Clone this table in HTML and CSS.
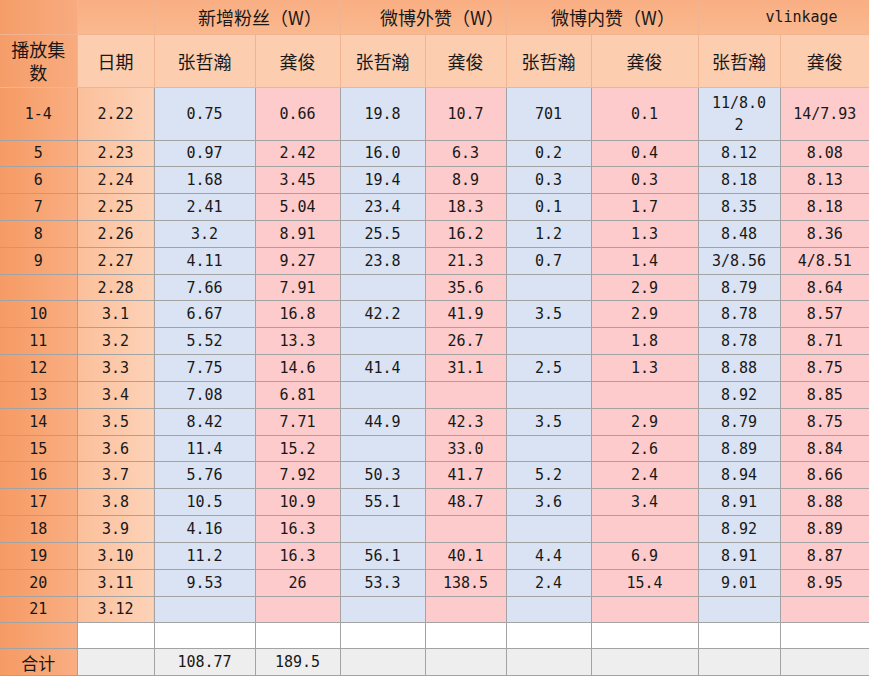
FILE: index.html
```html
<!DOCTYPE html>
<html lang="zh">
<head>
<meta charset="utf-8">
<title>数据统计</title>
<link rel="stylesheet" href="styles.css">
</head>
<body>
<table class="sheet">
  <colgroup>
    <col class="w77"><col class="w77"><col class="w101"><col class="w85"><col class="w85"><col class="w81"><col class="w85"><col class="w107"><col class="w82"><col class="w89">
  </colgroup>
  <thead>
    <tr class="h1">
      <th class="ep"></th>
      <th class="dt"></th>
      <th colspan="2" class="zh g1">新增粉丝（W）</th>
      <th colspan="2" class="zh g2">微博外赞（W）</th>
      <th colspan="2" class="zh g3">微博内赞（W）</th>
      <th colspan="2" class="mono g4">vlinkage</th>
    </tr>
    <tr class="h2">
      <th class="ep zh wrap">播放集数</th>
      <th class="dt zh">日期</th>
      <th class="zh">张哲瀚</th><th class="zh">龚俊</th>
      <th class="zh">张哲瀚</th><th class="zh">龚俊</th>
      <th class="zh">张哲瀚</th><th class="zh">龚俊</th>
      <th class="zh">张哲瀚</th><th class="zh last">龚俊</th>
    </tr>
  </thead>
  <tbody>
    <tr class="tall"><td class="ep">1-4</td><td class="dt">2.22</td><td class="b">0.75</td><td class="p">0.66</td><td class="b">19.8</td><td class="p">10.7</td><td class="b">701</td><td class="p">0.1</td><td class="b two">11/8.0<br>2</td><td class="p last">14/7.93</td></tr>
    <tr class="r"><td class="ep">5</td><td class="dt">2.23</td><td class="b">0.97</td><td class="p">2.42</td><td class="b">16.0</td><td class="p">6.3</td><td class="b">0.2</td><td class="p">0.4</td><td class="b">8.12</td><td class="p last">8.08</td></tr>
    <tr class="r"><td class="ep">6</td><td class="dt">2.24</td><td class="b">1.68</td><td class="p">3.45</td><td class="b">19.4</td><td class="p">8.9</td><td class="b">0.3</td><td class="p">0.3</td><td class="b">8.18</td><td class="p last">8.13</td></tr>
    <tr class="r"><td class="ep">7</td><td class="dt">2.25</td><td class="b">2.41</td><td class="p">5.04</td><td class="b">23.4</td><td class="p">18.3</td><td class="b">0.1</td><td class="p">1.7</td><td class="b">8.35</td><td class="p last">8.18</td></tr>
    <tr class="r"><td class="ep">8</td><td class="dt">2.26</td><td class="b">3.2</td><td class="p">8.91</td><td class="b">25.5</td><td class="p">16.2</td><td class="b">1.2</td><td class="p">1.3</td><td class="b">8.48</td><td class="p last">8.36</td></tr>
    <tr class="r"><td class="ep">9</td><td class="dt">2.27</td><td class="b">4.11</td><td class="p">9.27</td><td class="b">23.8</td><td class="p">21.3</td><td class="b">0.7</td><td class="p">1.4</td><td class="b">3/8.56</td><td class="p last">4/8.51</td></tr>
    <tr class="r"><td class="ep"></td><td class="dt">2.28</td><td class="b">7.66</td><td class="p">7.91</td><td class="b"></td><td class="p">35.6</td><td class="b"></td><td class="p">2.9</td><td class="b">8.79</td><td class="p last">8.64</td></tr>
    <tr class="r"><td class="ep">10</td><td class="dt">3.1</td><td class="b">6.67</td><td class="p">16.8</td><td class="b">42.2</td><td class="p">41.9</td><td class="b">3.5</td><td class="p">2.9</td><td class="b">8.78</td><td class="p last">8.57</td></tr>
    <tr class="r"><td class="ep">11</td><td class="dt">3.2</td><td class="b">5.52</td><td class="p">13.3</td><td class="b"></td><td class="p">26.7</td><td class="b"></td><td class="p">1.8</td><td class="b">8.78</td><td class="p last">8.71</td></tr>
    <tr class="r"><td class="ep">12</td><td class="dt">3.3</td><td class="b">7.75</td><td class="p">14.6</td><td class="b">41.4</td><td class="p">31.1</td><td class="b">2.5</td><td class="p">1.3</td><td class="b">8.88</td><td class="p last">8.75</td></tr>
    <tr class="r"><td class="ep">13</td><td class="dt">3.4</td><td class="b">7.08</td><td class="p">6.81</td><td class="b"></td><td class="p"></td><td class="b"></td><td class="p"></td><td class="b">8.92</td><td class="p last">8.85</td></tr>
    <tr class="r"><td class="ep">14</td><td class="dt">3.5</td><td class="b">8.42</td><td class="p">7.71</td><td class="b">44.9</td><td class="p">42.3</td><td class="b">3.5</td><td class="p">2.9</td><td class="b">8.79</td><td class="p last">8.75</td></tr>
    <tr class="r"><td class="ep">15</td><td class="dt">3.6</td><td class="b">11.4</td><td class="p">15.2</td><td class="b"></td><td class="p">33.0</td><td class="b"></td><td class="p">2.6</td><td class="b">8.89</td><td class="p last">8.84</td></tr>
    <tr class="r"><td class="ep">16</td><td class="dt">3.7</td><td class="b">5.76</td><td class="p">7.92</td><td class="b">50.3</td><td class="p">41.7</td><td class="b">5.2</td><td class="p">2.4</td><td class="b">8.94</td><td class="p last">8.66</td></tr>
    <tr class="r"><td class="ep">17</td><td class="dt">3.8</td><td class="b">10.5</td><td class="p">10.9</td><td class="b">55.1</td><td class="p">48.7</td><td class="b">3.6</td><td class="p">3.4</td><td class="b">8.91</td><td class="p last">8.88</td></tr>
    <tr class="r"><td class="ep">18</td><td class="dt">3.9</td><td class="b">4.16</td><td class="p">16.3</td><td class="b"></td><td class="p"></td><td class="b"></td><td class="p"></td><td class="b">8.92</td><td class="p last">8.89</td></tr>
    <tr class="r"><td class="ep">19</td><td class="dt">3.10</td><td class="b">11.2</td><td class="p">16.3</td><td class="b">56.1</td><td class="p">40.1</td><td class="b">4.4</td><td class="p">6.9</td><td class="b">8.91</td><td class="p last">8.87</td></tr>
    <tr class="r"><td class="ep">20</td><td class="dt">3.11</td><td class="b">9.53</td><td class="p">26</td><td class="b">53.3</td><td class="p">138.5</td><td class="b">2.4</td><td class="p">15.4</td><td class="b">9.01</td><td class="p last">8.95</td></tr>
    <tr class="r"><td class="ep">21</td><td class="dt">3.12</td><td class="b"></td><td class="p"></td><td class="b"></td><td class="p"></td><td class="b"></td><td class="p"></td><td class="b"></td><td class="p last"></td></tr>
    <tr class="blank"><td class="ep"></td><td></td><td></td><td></td><td></td><td></td><td></td><td></td><td></td><td class="last"></td></tr>
    <tr class="total"><td class="ep zh sm">合计</td><td></td><td>108.77</td><td>189.5</td><td></td><td></td><td></td><td></td><td></td><td class="last"></td></tr>
  </tbody>
</table>
</body>
</html>
```

FILE: styles.css
```css
html, body {
  margin: 0;
  padding: 0;
  background: #ffffff;
  overflow: hidden;
}

.sheet {
  width: 869px;
  table-layout: fixed;
  border-collapse: collapse;
  font-family: "DejaVu Sans Mono", "Noto Sans CJK SC", monospace;
  font-size: 15px;
  color: #181818;
}

.w77 { width: 77px; }
.w101 { width: 101px; }
.w85 { width: 85px; }
.w81 { width: 81px; }
.w107 { width: 107px; }
.w82 { width: 82px; }
.w89 { width: 89px; }

.sheet th,
.sheet td {
  padding: 0 2px;
  text-align: center;
  vertical-align: middle;
  border: 1px solid #a3a3a3;
  font-weight: normal;
  white-space: nowrap;
  overflow: hidden;
}

.sheet .last { border-right: none; }

.sheet tr:first-child th { border-top: none; }
.sheet tr > :first-child { border-left: none; }

/* header */
.h1 { height: 34px; }
.h2 { height: 53px; }

.h1 th {
  background: linear-gradient(to bottom, #f9ae83, #fab88e);
  border-color: #f0b493;
}
.h2 th {
  background: #fccdaf;
  border-color: #f0b493;
}
.h1 th.ep, .h2 th.ep {
  background: linear-gradient(to right, #f59d69, #f8ab7f);
}

.zh {
  font-family: "Noto Sans CJK SC", sans-serif;
  font-size: 18px;
}
.mono {
  font-family: "DejaVu Sans Mono", monospace;
  font-size: 15px;
}
.sm { font-size: 17px; }

.sheet .g1 { padding: 0 0 0 26px; }
.sheet .g2 { padding: 0 0 0 38px; }
.sheet .g3 { padding: 0 0 0 22px; }
.sheet .g4 { padding: 0 0 0 36px; }

.sheet .wrap {
  white-space: normal;
  line-height: 23px;
  padding: 0 11px;
}

/* body */
.tall { height: 53px; }
.r { height: 26.83px; }
.blank { height: 26px; }
.total { height: 27px; }

.two { line-height: 22px; }

td.ep {
  background: linear-gradient(to right, #f59a64, #f9ae82);
}
td.dt {
  background: linear-gradient(to right, #fbbf9a, #fdd2b7);
}
td.b { background: #dae3f3; }
td.p { background: #fdcbcb; }

.blank td { background: #ffffff; }
.total td { background: #eeeeee; }
.blank td.ep, .total td.ep {
  background: linear-gradient(to right, #f59a64, #f9ae82);
}
```
